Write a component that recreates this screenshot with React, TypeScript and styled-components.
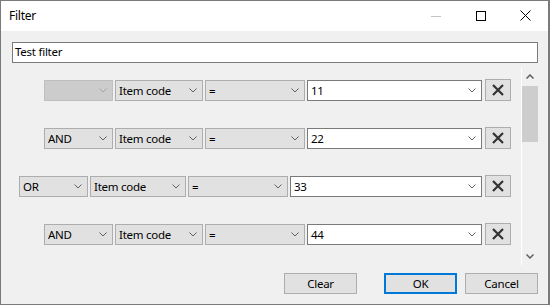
import styled, { createGlobalStyle } from 'styled-components';

const GlobalStyle = createGlobalStyle`
  html, body {
    margin: 0;
    padding: 0;
    background: #ffffff;
  }
  body {
    font-family: 'Noto Sans', 'Liberation Sans', sans-serif;
    font-size: 11.5px;
    letter-spacing: -0.25px;
    color: #000;
  }
`;

type Variant = 'normal' | 'disabled' | 'value';

type Condition = {
  op: string;
  field: string;
  cmp: string;
  value: string;
  wide?: boolean;
};

const conditions: Condition[] = [
  { op: '', field: 'Item code', cmp: '=', value: '11' },
  { op: 'AND', field: 'Item code', cmp: '=', value: '22' },
  { op: 'OR', field: 'Item code', cmp: '=', value: '33', wide: true },
  { op: 'AND', field: 'Item code', cmp: '=', value: '44' },
];

const Chevron = ({ color }: { color: string }) => (
  <svg width="8" height="5" viewBox="0 0 8 5">
    <path d="M0.5 0.5 L4 4 L7.5 0.5" fill="none" stroke={color} strokeWidth="1" />
  </svg>
);

const ComboBox = ({ width, variant, text }: { width: number; variant: Variant; text: string }) => (
  <SCombo $width={width} $variant={variant}>
    <SComboText>{text}</SComboText>
    <Chevron color={variant === 'disabled' ? '#a6a6a6' : '#606060'} />
  </SCombo>
);

export default function App() {
  return (
    <>
      <GlobalStyle />
      <SWindow>
        <STitleBar>
          <STitle>Filter</STitle>
          <SCaptionButtons>
            <SCaptionButton>
              <svg width="10" height="10" viewBox="0 0 10 10">
                <line x1="0" y1="5.5" x2="10" y2="5.5" stroke="#c4c4c4" strokeWidth="1" />
              </svg>
            </SCaptionButton>
            <SCaptionButton>
              <svg width="10" height="10" viewBox="0 0 10 10">
                <rect x="0.5" y="0.5" width="9" height="9" fill="none" stroke="#000" strokeWidth="1" />
              </svg>
            </SCaptionButton>
            <SCaptionButton>
              <svg width="11" height="11" viewBox="0 0 11 11">
                <path d="M0.5 0.5 L10.5 10.5 M10.5 0.5 L0.5 10.5" stroke="#000" strokeWidth="1" />
              </svg>
            </SCaptionButton>
          </SCaptionButtons>
        </STitleBar>

        <SBody>
          <SNameInput>Test filter</SNameInput>

          <SScrollArea>
            <SRows>
              {conditions.map((c, i) => (
                <SRow key={i}>
                  <SCombos>
                    <ComboBox width={69} variant={c.op ? 'normal' : 'disabled'} text={c.op} />
                    <ComboBox width={c.wide ? 96 : 88} variant="normal" text={c.field} />
                    <ComboBox width={100} variant="normal" text={c.cmp} />
                    <ComboBox width={c.wide ? 192 : 175} variant="value" text={c.value} />
                  </SCombos>
                  <SDeleteButton>
                    <svg width="14" height="14" viewBox="0 0 14 14">
                      <path d="M2 2 L12 12 M12 2 L2 12" stroke="#333" strokeWidth="2.2" />
                    </svg>
                  </SDeleteButton>
                </SRow>
              ))}
            </SRows>
            <SScrollBar>
              <SScrollArrow>
                <svg width="8" height="5" viewBox="0 0 8 5">
                  <path d="M0.5 4.5 L4 1 L7.5 4.5" fill="none" stroke="#606060" strokeWidth="1.5" />
                </svg>
              </SScrollArrow>
              <STrack>
                <SThumb />
              </STrack>
              <SScrollArrow>
                <svg width="8" height="5" viewBox="0 0 8 5">
                  <path d="M0.5 0.5 L4 4 L7.5 0.5" fill="none" stroke="#606060" strokeWidth="1.5" />
                </svg>
              </SScrollArrow>
            </SScrollBar>
          </SScrollArea>

          <SFooter>
            <SButton $gapRight={27}>Clear</SButton>
            <SButton $default $gapRight={8}>OK</SButton>
            <SButton>Cancel</SButton>
          </SFooter>
        </SBody>
      </SWindow>
    </>
  );
}

const SWindow = styled.div`
  box-sizing: border-box;
  width: 550px;
  height: 305px;
  border: 1px solid #7a7a7a;
  border-right-width: 2px;
  background: #f0f0f0;
  display: flex;
  flex-direction: column;
`;

const STitleBar = styled.div`
  height: 30px;
  background: #fff;
  display: flex;
  align-items: center;
  justify-content: space-between;
  padding-left: 8px;
`;

const STitle = styled.span`
  font-size: 12px;
  margin-top: -1px;
`;

const SCaptionButtons = styled.div`
  display: flex;
  height: 100%;
`;

const SCaptionButton = styled.div`
  width: 45px;
  display: flex;
  align-items: center;
  justify-content: center;
  margin-top: -1px;
`;

const SBody = styled.div`
  flex: 1;
  display: flex;
  flex-direction: column;
  padding: 11px 10px 0 11px;
`;

const SNameInput = styled.div`
  box-sizing: border-box;
  height: 21px;
  width: 526px;
  border: 1px solid #7a7a7a;
  background: #fff;
  padding-left: 2px;
  line-height: 18px;
`;

const SScrollArea = styled.div`
  display: flex;
  margin: 5px 0 0 -10px;
  height: 197px;
`;

const SRows = styled.div`
  flex: 1;
  display: flex;
  flex-direction: column;
  gap: 26px;
  padding: 11px 10px 0 0;
  border-right: 1px solid #fff;
  overflow: hidden;
`;

const SRow = styled.div`
  display: flex;
  justify-content: flex-end;
  align-items: center;
  gap: 3px;
  height: 22px;
`;

const SCombos = styled.div`
  display: flex;
  gap: 2px;
`;

const SCombo = styled.div<{ $width: number; $variant: Variant }>`
  box-sizing: border-box;
  width: ${(p) => p.$width}px;
  height: 21px;
  display: flex;
  align-items: center;
  padding: 0 5px 0 3px;
  border: 1px solid
    ${(p) => (p.$variant === 'value' ? '#7a7a7a' : p.$variant === 'disabled' ? '#bfbfbf' : '#adadad')};
  background: ${(p) => (p.$variant === 'value' ? '#fff' : p.$variant === 'disabled' ? '#cccccc' : '#e1e1e1')};
`;

const SComboText = styled.span`
  flex: 1;
  white-space: nowrap;
  overflow: hidden;
`;

const SDeleteButton = styled.div`
  box-sizing: border-box;
  width: 26px;
  height: 22px;
  border: 1px solid #adadad;
  background: #e1e1e1;
  display: flex;
  align-items: center;
  justify-content: center;
`;

const SScrollBar = styled.div`
  width: 16px;
  display: flex;
  flex-direction: column;
  background: #f0f0f0;
`;

const SScrollArrow = styled.div`
  height: 17px;
  display: flex;
  align-items: center;
  justify-content: center;
`;

const STrack = styled.div`
  flex: 1;
  padding-top: 1px;
`;

const SThumb = styled.div`
  height: 56px;
  background: #cdcdcd;
`;

const SFooter = styled.div`
  display: flex;
  justify-content: flex-end;
  margin-top: 8px;
`;

const SButton = styled.div<{ $default?: boolean; $gapRight?: number }>`
  box-sizing: border-box;
  width: 73px;
  height: 21px;
  margin-right: ${(p) => p.$gapRight ?? 0}px;
  display: flex;
  align-items: center;
  justify-content: center;
  background: #e1e1e1;
  border: ${(p) => (p.$default ? '2px solid #0078d7' : '1px solid #adadad')};
`;
